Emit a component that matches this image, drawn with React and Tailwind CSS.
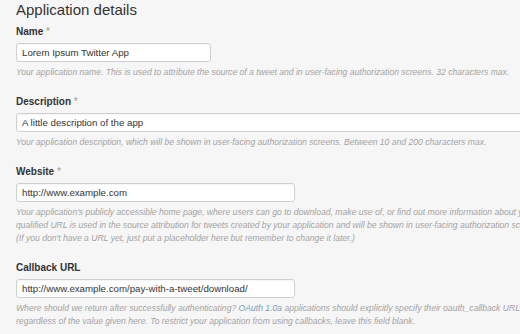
import React from "react";

const font = { fontFamily: '"Liberation Sans", Arial, Helvetica, sans-serif' };

function Label({ children, required }) {
  return (
    <div className="text-[10px] leading-[14px] font-bold text-[#333]">
      {children}
      {required && <span className="font-normal text-[#999]"> *</span>}
    </div>
  );
}

function Input({ value, width }) {
  return (
    <div
      className={
        "mt-[4px] h-[19px] shrink-0 rounded-[3px] border border-[#cfcfcf] bg-white px-[5px] text-[9.7px] leading-[17px] text-[#333] whitespace-nowrap shadow-[inset_0_1px_1px_rgba(0,0,0,0.04)] " +
        width
      }
    >
      {value}
    </div>
  );
}

function Help({ children }) {
  return (
    <div className="mt-[4px] text-[8.6px] leading-[13px] italic text-[#a3a3a3] whitespace-nowrap">
      {children}
    </div>
  );
}

export default function App() {
  return (
    <div
      className="w-[520px] h-[334px] overflow-hidden bg-[#f6f6f6] pl-[16px]"
      style={font}
    >
      <h2 className="text-[15px] leading-[20px] font-normal text-[#333]">
        Application details
      </h2>

      {/* Name */}
      <div className="mt-[5px]">
        <Label required>Name</Label>
        <Input value="Lorem Ipsum Twitter App" width="w-[195px]" />
        <Help>
          Your application name. This is used to attribute the source of a
          tweet and in user-facing authorization screens. 32 characters max.
        </Help>
      </div>

      {/* Description */}
      <div className="mt-[16px]">
        <Label required>Description</Label>
        <Input value="A little description of the app" width="w-[540px]" />
        <Help>
          Your application description, which will be shown in user-facing
          authorization screens. Between 10 and 200 characters max.
        </Help>
      </div>

      {/* Website */}
      <div className="mt-[16px]">
        <Label required>Website</Label>
        <Input value="http://www.example.com" width="w-[279px]" />
        <Help>
          Your application's publicly accessible home page, where users can go
          to download, make use of, or find out more information about your
          application. This fully-
          <br />
          qualified URL is used in the source attribution for tweets created by
          your application and will be shown in user-facing authorization
          screens.
          <br />
          (If you don't have a URL yet, just put a placeholder here but
          remember to change it later.)
        </Help>
      </div>

      {/* Callback URL */}
      <div className="mt-[16px]">
        <Label>Callback URL</Label>
        <Input
          value="http://www.example.com/pay-with-a-tweet/download/"
          width="w-[279px]"
        />
        <Help>
          Where should we return after successfully authenticating?{" "}
          <a className="text-[#7b9cbf]">OAuth 1.0a</a> applications should
          explicitly specify their oauth_callback URL on the request token
          step,
          <br />
          regardless of the value given here. To restrict your application from
          using callbacks, leave this field blank.
        </Help>
      </div>
    </div>
  );
}
